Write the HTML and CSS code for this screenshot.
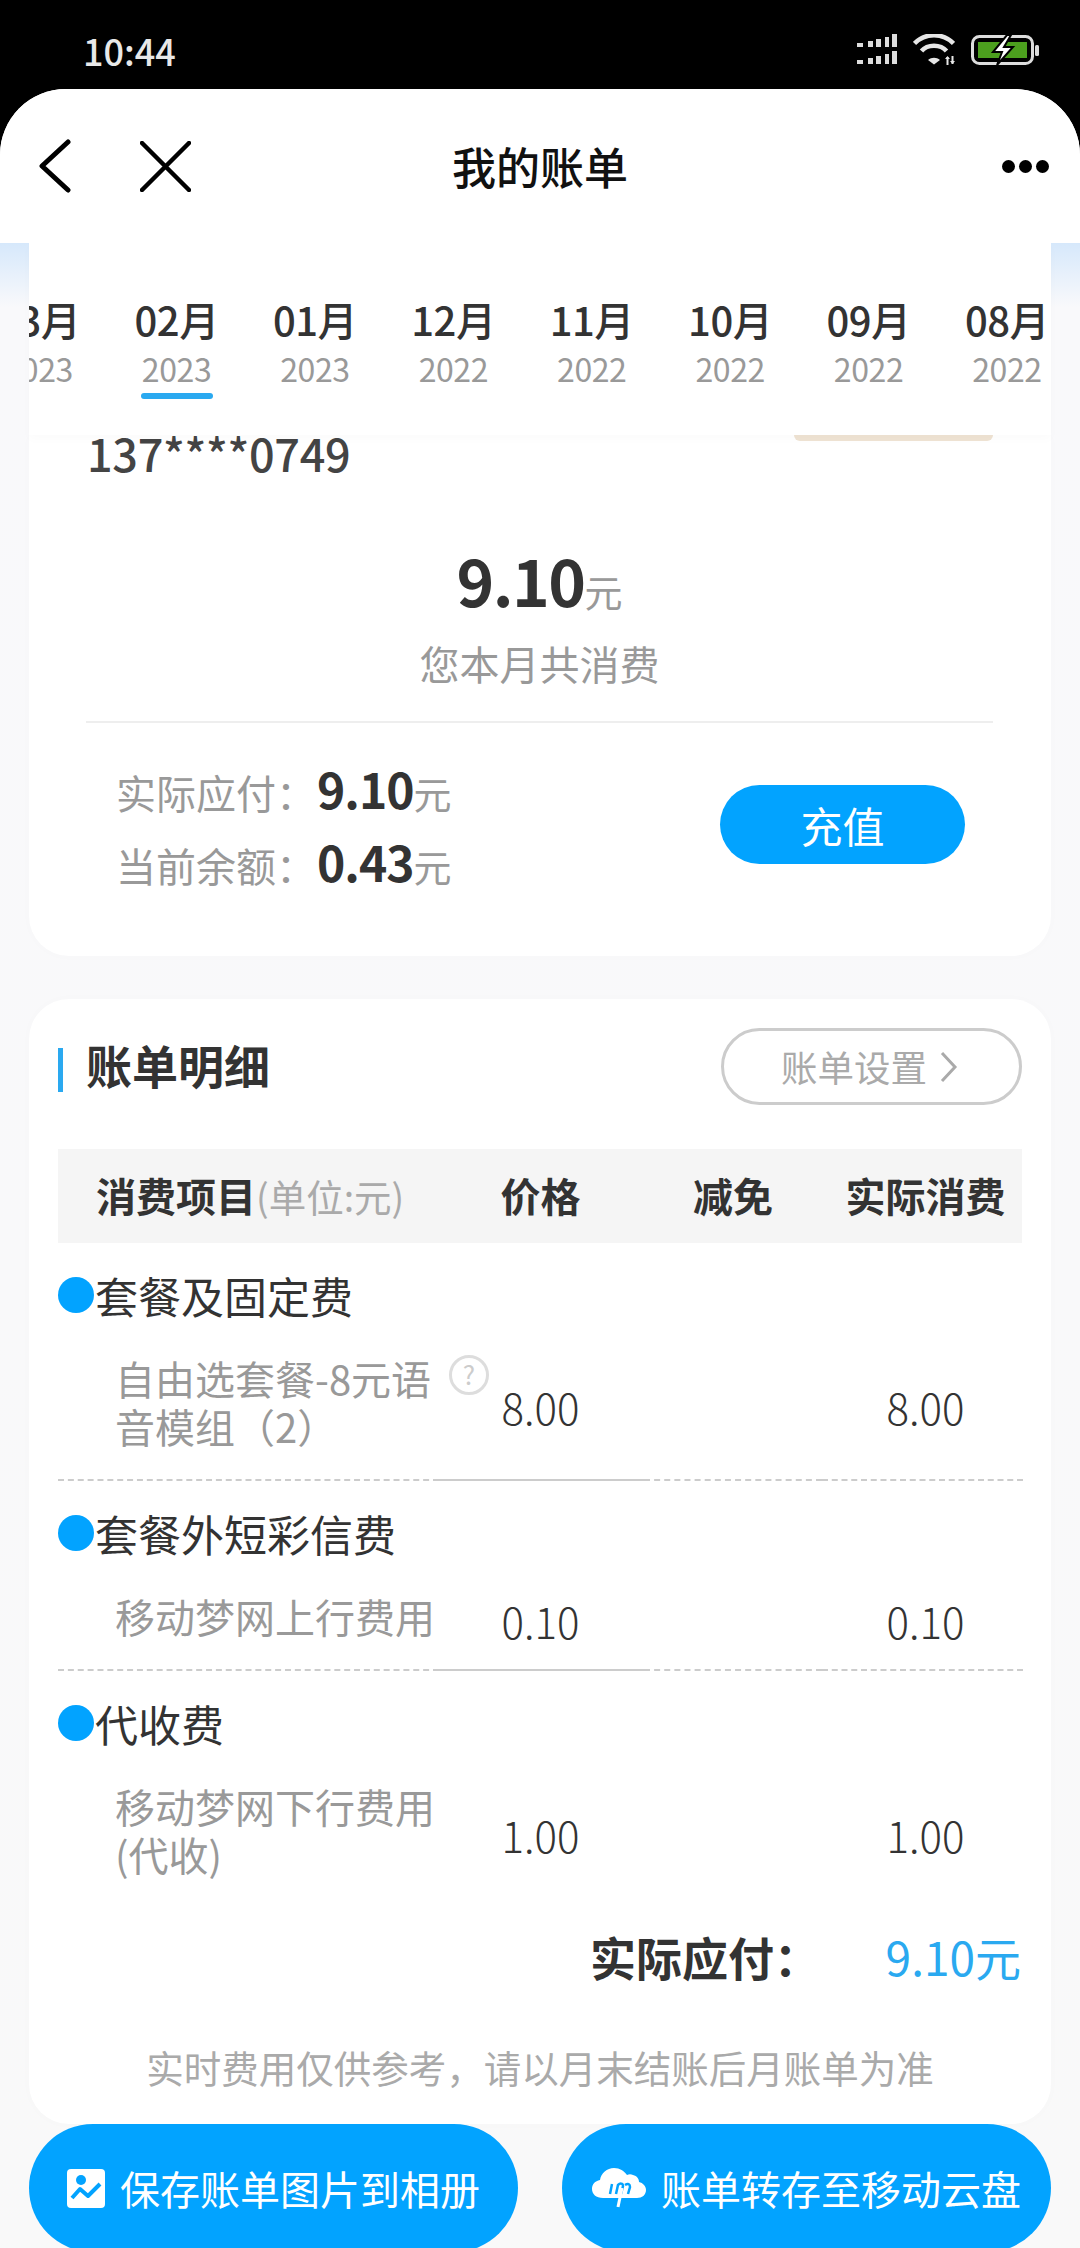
FILE: index.html
```html
<!DOCTYPE html>
<html lang="zh-CN">
<head>
<meta charset="utf-8">
<title>我的账单</title>
<link rel="stylesheet" href="styles.css">
</head>
<body>
<div class="status">
  <span class="time">10:44</span>
  <div class="status-icons">
    <svg class="ic-signal" width="40" height="31" viewBox="0 0 40 31" fill="#ddd">
      <rect x="0" y="9" width="6" height="4"/><rect x="11" y="7" width="5" height="6"/><rect x="19" y="5" width="5" height="8"/><rect x="28" y="3" width="4" height="10"/><rect x="35" y="0" width="5" height="13"/>
      <rect x="0" y="26" width="6" height="4"/><rect x="11" y="24" width="5" height="6"/><rect x="19" y="22" width="5" height="8"/><rect x="28" y="20" width="4" height="10"/><rect x="35" y="17" width="5" height="13"/>
    </svg>
    <svg class="ic-wifi" width="42" height="31" viewBox="0 0 42 31" fill="none" stroke="#e6e6e6" stroke-width="4.500">
      <path d="M1.500 9.500C12 -1.500 30 -1.500 40.500 9.500"/>
      <path d="M8.500 17C14.500 10 27.500 10 33.500 17"/>
      <path d="M21 30.500l-6-4.500c3.500-3 8.500-3 12 0z" fill="#e6e6e6" stroke="none"/>
      <path d="M34.500 23v8M39.500 22v8" stroke-width="2"/>
      <path d="M32 25l2.500-3 2.500 3zM37 27l2.500 3 2.500-3z" fill="#e6e6e6" stroke="none"/>
    </svg>
    <svg class="ic-battery" width="69" height="30" viewBox="0 0 69 30">
      <rect x="1.500" y="1.500" width="60" height="27" rx="7" fill="none" stroke="#ddd" stroke-width="3"/>
      <rect x="7" y="7" width="49" height="16" fill="#4c9f1e"/>
      <rect x="64" y="10" width="4" height="11" rx="1.500" fill="#ddd"/>
      <path d="M36 0L22 17h9l-5 13 16-18h-9l7-12z" fill="#fff" stroke="#000" stroke-width="2"/>
    </svg>
  </div>
</div>
<main class="page">
  <header class="nav">
    <div class="nav-left">
      <svg width="32" height="54" viewBox="0 0 32 54" fill="none" stroke="#000" stroke-width="5" stroke-linecap="round" stroke-linejoin="round"><path d="M29 3L3 27l26 24"/></svg>
      <svg width="51" height="51" viewBox="0 0 51 51" fill="none" stroke="#000" stroke-width="4.500" stroke-linecap="round"><path d="M2 2l47 47M49 2L2 49"/></svg>
    </div>
    <h1 class="nav-title">我的账单</h1>
    <div class="nav-right">
      <svg width="47" height="13" viewBox="0 0 47 13" fill="#000"><circle cx="6.500" cy="6.500" r="6.500"/><circle cx="23.500" cy="6.500" r="6.500"/><circle cx="40.500" cy="6.500" r="6.500"/></svg>
    </div>
  </header>
  <div class="content">
    <nav class="tabs">
      <div class="tab"><span class="tab-m">03月</span><span class="tab-y">2023</span></div>
      <div class="tab active"><span class="tab-m">02月</span><span class="tab-y">2023</span><i class="tab-bar"></i></div>
      <div class="tab"><span class="tab-m">01月</span><span class="tab-y">2023</span></div>
      <div class="tab"><span class="tab-m">12月</span><span class="tab-y">2022</span></div>
      <div class="tab"><span class="tab-m">11月</span><span class="tab-y">2022</span></div>
      <div class="tab"><span class="tab-m">10月</span><span class="tab-y">2022</span></div>
      <div class="tab"><span class="tab-m">09月</span><span class="tab-y">2022</span></div>
      <div class="tab"><span class="tab-m">08月</span><span class="tab-y">2022</span></div>
    </nav>
    <section class="card card-summary">
      <div class="phone-row">
        <span class="phone">137****0749</span>
        <i class="tag-stub"></i>
      </div>
      <div class="total"><b>9.10</b><span>元</span></div>
      <p class="total-sub">您本月共消费</p>
      <div class="rule"></div>
      <div class="pay-row">
        <div class="pay-list">
          <div class="pay-line"><span class="pay-label">实际应付：</span><b>9.10</b><span class="pay-unit">元</span></div>
          <div class="pay-line"><span class="pay-label">当前余额：</span><b>0.43</b><span class="pay-unit">元</span></div>
        </div>
        <div class="recharge">充值</div>
      </div>
    </section>
    <section class="card card-detail">
      <div class="detail-head">
        <h2 class="detail-title"><span>账单明细</span></h2>
        <div class="settings">账单设置<svg width="18" height="32" viewBox="0 0 18 32" fill="none" stroke="#aaa" stroke-width="3"><path d="M2 2l13 14L2 30"/></svg></div>
      </div>
      <div class="grid head">
        <div class="c-name"><b>消费项目</b><span class="unit">(单位:元)</span></div>
        <div class="c-num"><b>价格</b></div>
        <div class="c-num"><b>减免</b></div>
        <div class="c-num c-last"><b>实际消费</b></div>
      </div>
      <div class="group"><i class="dot"></i>套餐及固定费</div>
      <div class="grid item">
        <div class="c-name"><span class="name">自由选套餐-8元语音模组（2）</span><span class="help">?</span></div>
        <div class="c-num val mid">8.00</div>
        <div class="c-num val"></div>
        <div class="c-num c-last val">8.00</div>
      </div>
      <div class="group"><i class="dot"></i>套餐外短彩信费</div>
      <div class="grid item">
        <div class="c-name"><span class="name">移动梦网上行费用</span></div>
        <div class="c-num val mid">0.10</div>
        <div class="c-num val"></div>
        <div class="c-num c-last val">0.10</div>
      </div>
      <div class="group"><i class="dot"></i>代收费</div>
      <div class="grid item plain">
        <div class="c-name"><span class="name">移动梦网下行费用(代收)</span></div>
        <div class="c-num val first">1.00</div>
        <div class="c-num val"></div>
        <div class="c-num c-last val">1.00</div>
      </div>
      <div class="sum"><b>实际应付：</b><span class="sum-val">9.10元</span></div>
      <p class="note">实时费用仅供参考，请以月末结账后月账单为准</p>
    </section>
    <div class="actions">
      <div class="action">
        <svg width="38" height="39" viewBox="0 0 38 39"><rect width="38" height="39" rx="4" fill="#fff"/><circle cx="14" cy="11" r="5" fill="#02a3ff"/><path d="M5 29l8-9 8 7 12-12" fill="none" stroke="#02a3ff" stroke-width="4" stroke-linejoin="round"/></svg>
        <span>保存账单图片到相册</span>
      </div>
      <div class="action">
        <svg width="54" height="40" viewBox="0 0 54 40"><path d="M11 30C4 30 0 26 0 21c0-5 3-8 8-9 1-7 7-12 14-12 6 0 10 3 13 7 2-1 4-1 6 0 4 1 6 4 6 7 4 1 7 4 7 8 0 5-4 8-9 8z" fill="#fff"/><path d="M18 26l2-10M24 26l2-9c2-2 5-2 5 1l-2 8M33 17c3-2 5-1 5 2l-2 7" fill="none" stroke="#02a3ff" stroke-width="2.500"/><path d="M26 39l4-19" fill="none" stroke="#fff" stroke-width="3"/></svg>
        <span>账单转存至移动云盘</span>
      </div>
    </div>
  </div>
</main>
</body>
</html>
```

FILE: styles.css
```css
* { box-sizing: border-box; }
html, body { margin: 0; padding: 0; }
body {
  width: 1080px;
  height: 2248px;
  overflow: hidden;
  background: #000;
  font-family: "Noto Sans CJK SC", "Noto Sans", sans-serif;
  color: #333;
}
p, h1, h2 { margin: 0; font: inherit; }
i { display: block; font-style: normal; }

.status {
  height: 89px;
  display: flex;
  align-items: center;
  justify-content: space-between;
  padding: 10px 40px 0 83px;
}
.time { font-size: 36px; font-weight: 500; color: #e8e8e8; line-height: 40px; }
.status-icons { display: flex; align-items: center; gap: 16px; }

.page {
  height: 2159px;
  display: flex;
  flex-direction: column;
  overflow: hidden;
  background: #fff;
  border-radius: 66px 66px 0 0;
}
.nav {
  height: 154px;
  flex: none;
  display: grid;
  grid-template-columns: 1fr auto 1fr;
  align-items: center;
  background: #fff;
  padding: 0 39px;
}
.nav-left { display: flex; align-items: center; gap: 69px; }
.nav-left svg, .nav-right svg { display: block; }
.nav-title { font-size: 44px; font-weight: 500; color: #111; line-height: 60px; }
.nav-right { justify-self: end; margin-right: -8px; }

.content {
  flex: 1;
  min-height: 0;
  padding: 0 29px;
  display: flex;
  flex-direction: column;
  background: linear-gradient(#d6e8fb 0, #f9f9fb 64px, #f9f9f9 100%);
}

.tabs {
  height: 192px;
  flex: none;
  display: flex;
  overflow: hidden;
  background: #fff;
  position: relative;
  z-index: 2;
  padding-top: 53px;
  box-shadow: 0 4px 10px rgba(0, 0, 0, .02);
}
.tab {
  flex: 0 0 138.4px;
  display: flex;
  flex-direction: column;
  align-items: center;
}
.tab:first-child { margin-left: -60px; }
.tab-m { font-size: 40px; font-weight: 500; line-height: 46px; color: #333; letter-spacing: -.5px; }
.tab-y { font-size: 32px; line-height: 44px; color: #999; margin-top: 4px; letter-spacing: -.4px; }
.tab-bar { width: 72px; height: 6px; border-radius: 3px; background: #2aa9f0; margin-top: 3px; }

.card {
  background: #fff;
  flex: none;
  box-shadow: 0 0 12px rgba(0, 0, 0, .015);
}
.card-summary {
  height: 521px;
  padding: 0 58px 0 57px;
  border-radius: 0 0 40px 40px;
}
.phone-row { display: flex; justify-content: space-between; align-items: flex-start; padding-left: 1px; }
.phone { font-size: 45px; line-height: 42px; margin-top: -3px; font-weight: 500; color: #444; letter-spacing: -.3px; }
.tag-stub { width: 199px; height: 6px; background: #efe3d3; border-radius: 0 0 8px 8px; }
.total { height: 80px; text-align: center; line-height: 80px; margin-top: 65px; }
.total b { font-size: 64px; font-weight: 700; color: #333; letter-spacing: -1.500px; }
.total span { font-size: 38px; color: #999; }
.total-sub { text-align: center; font-size: 40px; line-height: 50px; color: #999; margin-top: 19px; }
.rule { height: 2px; background: #eee; margin-top: 33px; }
.pay-row { display: flex; justify-content: space-between; padding: 29px 28px 0 30px; }
.pay-line { height: 73px; line-height: 72px; white-space: nowrap; }
.pay-label { display: inline-block; width: 201px; font-size: 40px; color: #999; }
.pay-line b { font-size: 48px; font-weight: 700; color: #333; letter-spacing: -1px; }
.pay-unit { font-size: 38px; color: #999; }
.recharge {
  width: 245px;
  height: 79px;
  margin-top: 33px;
  border-radius: 40px;
  background: #02a3ff;
  color: #fff;
  font-size: 42px;
  line-height: 79px;
  text-align: center;
}

.card-detail {
  margin-top: 43px;
  height: 1125px;
  padding: 29px 29px 0 29px;
  border-radius: 40px;
}
.detail-head { display: flex; justify-content: space-between; align-items: center; }
.detail-title {
  height: 44px;
  font-size: 46px;
  font-weight: 700;
  color: #333;
  padding-left: 23px;
  border-left: 5px solid #2aa9f0;
  margin-top: 6px;
}
.detail-title span { display: block; line-height: 44px; margin-top: -6px; }
.settings {
  width: 301px;
  height: 77px;
  border: 3px solid #ccc;
  border-radius: 39px;
  display: flex;
  align-items: center;
  gap: 13px;
  padding-left: 57px;
  font-size: 36.500px;
  color: #aaa;
}

.grid { display: grid; grid-template-columns: 381px 205px 178px 201px; }
.head { height: 94px; margin-top: 44px; background: #f5f5f5; align-items: center; font-size: 40px; color: #333; padding-bottom: 2px; }
.head .c-name { padding-left: 38px; white-space: nowrap; }
.head b { font-weight: 700; }
.unit { font-size: 37.500px; color: #aaa; }
.c-num { text-align: center; }
.head .c-num:nth-child(2) { padding-right: 2px; }
.c-last { padding-left: 6px; }

.group {
  display: flex;
  align-items: center;
  gap: 1px;
  height: 60px;
  margin-top: 22px;
  font-size: 43px;
  color: #333;
  line-height: 60px;
}
.dot { width: 36px; height: 36px; border-radius: 50%; background: #02a3ff; }
.item { margin-top: 29px; }
.item > div { border-bottom: 2px dashed #ccc; padding-bottom: 29px; }
.item > .mid { border-bottom: 2px solid #ccc; }
.item.plain > div { border-bottom: 0; padding-bottom: 0; }
.item .c-name { display: flex; align-items: flex-start; padding-left: 57px; gap: 12px; }
.name { flex: 0 0 322px; font-size: 40px; line-height: 48px; color: #999; }
.help {
  flex: none;
  width: 40px;
  height: 40px;
  margin-top: 1px;
  border: 3px solid #ddd;
  border-radius: 50%;
  font-size: 26px;
  line-height: 32px;
  text-align: center;
  color: #ccc;
}
.item > .val {
  display: flex;
  align-items: center;
  justify-content: center;
  padding-top: 5px;
  padding-bottom: 24px;
  font-size: 42px;
  font-weight: 300;
  color: #333;
  line-height: 48px;
}
.item > .mid, .item > .first { padding-right: 2px; }
.item.plain > .val { padding-top: 10px; padding-bottom: 0; }

.sum { display: flex; justify-content: space-between; padding: 0 1px 0 532px; margin-top: 48px; line-height: 60px; }
.sum b { font-size: 46px; font-weight: 700; color: #333; }
.sum-val { font-size: 46px; color: #2aa9f0; }
.note { text-align: center; font-size: 37.500px; line-height: 50px; color: #aaa; margin-top: 56px; }

.actions { display: flex; gap: 44px; flex: none; }
.action {
  flex: 0 0 489px;
  height: 128px;
  border-radius: 64px;
  background: #02a3ff;
  color: #fff;
  font-size: 40px;
  display: flex;
  align-items: center;
  justify-content: center;
  gap: 15px;
}
.action svg { display: block; }
```
